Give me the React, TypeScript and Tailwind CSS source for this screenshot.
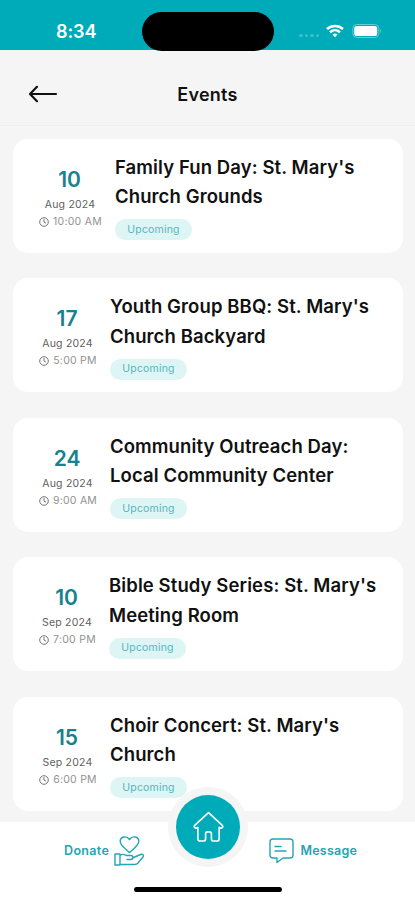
type ChurchEvent = {
  day: string;
  month: string;
  time: string;
  lines: string[];
  dateWidth: string;
};

const events: ChurchEvent[] = [
  { day: "10", month: "Aug 2024", time: "10:00 AM", lines: ["Family Fun Day: St. Mary's", "Church Grounds"], dateWidth: "w-[63px]" },
  { day: "17", month: "Aug 2024", time: "5:00 PM", lines: ["Youth Group BBQ: St. Mary's", "Church Backyard"], dateWidth: "w-[58px]" },
  { day: "24", month: "Aug 2024", time: "9:00 AM", lines: ["Community Outreach Day:", "Local Community Center"], dateWidth: "w-[58px]" },
  { day: "10", month: "Sep 2024", time: "7:00 PM", lines: ["Bible Study Series: St. Mary's", "Meeting Room"], dateWidth: "w-[57px]" },
  { day: "15", month: "Sep 2024", time: "6:00 PM", lines: ["Choir Concert: St. Mary's", "Church"], dateWidth: "w-[58px]" },
];

function StatusBar() {
  return (
    <header className="relative flex h-[50px] shrink-0 items-start bg-[#00abb9]">
      <span className="ml-[56px] mt-[20px] text-[18px] font-semibold leading-6 tracking-[-0.1px] text-white">8:34</span>
      <div className="absolute left-[142px] top-[12px] z-10 h-[39px] w-[132px] rounded-full bg-black" />
      <div className="ml-auto mr-[33px] mt-[23px] flex items-center">
        <div className="mr-[7px] mt-[9px] flex gap-[2px]">
          {[0, 1, 2, 3].map((dot) => (
            <i key={dot} className="size-[3.5px] rounded-full bg-[#3cbfca]" />
          ))}
        </div>
        <svg width="18" height="14" viewBox="0 0 18 14" fill="none" stroke="white" strokeWidth="2.5">
          <path d="M1 5C5.5.9 12.500.9 17 5" />
          <path d="M4 8.300C7 5.600 11 5.600 14 8.300" />
          <path d="M6.500 10.600Q9 8.500 11.500 10.600L9 13.200Z" fill="white" stroke="none" />
        </svg>
        <svg className="ml-[8px]" width="30" height="16" viewBox="0 0 30 16">
          <rect x=".8" y="1.500" width="26" height="13" rx="4" fill="none" stroke="#63ccd5" />
          <rect x="2.200" y="3" width="23" height="10" rx="2.600" fill="white" />
          <path d="M28 6q2 2 0 4z" fill="#63ccd5" />
        </svg>
      </div>
    </header>
  );
}

function EventCard({ event }: { event: ChurchEvent }) {
  return (
    <article className="flex h-[114px] shrink-0 rounded-[15px] bg-white pl-[26px]">
      <div className={`flex shrink-0 flex-col items-center pt-[28px] ${event.dateWidth}`}>
        <span className="mr-[2px] text-[21px] font-semibold leading-[26px] text-[#17818f]">{event.day}</span>
        <span className="mr-px mt-[4px] whitespace-nowrap text-[10.5px] leading-4 tracking-[0.2px] text-[#606060]">{event.month}</span>
        <span className="mt-px flex items-center gap-[4px] whitespace-nowrap text-[10.5px] leading-4 tracking-[0.25px] text-[#929292]">
          <svg width="10" height="10" viewBox="0 0 10 10" fill="none" stroke="#747474">
            <circle cx="5" cy="5" r="4.300" />
            <path d="M5 2v3l2 1.200" />
          </svg>
          {event.time}
        </span>
      </div>
      <div className="ml-[13px] pt-[14px]">
        <h2 className="text-[18.5px] font-semibold leading-[29.5px] tracking-[0.1px] text-[#111]">
          {event.lines.map((line) => (
            <span key={line} className="block whitespace-nowrap">{line}</span>
          ))}
        </h2>
        <span className="mt-[7.5px] flex h-[21px] w-[77px] items-center justify-center rounded-full bg-[#def5f5] text-[10.5px] tracking-[0.2px] text-[#55b5bd]">
          Upcoming
        </span>
      </div>
    </article>
  );
}

function BottomNav() {
  return (
    <nav className="relative flex h-[78px] shrink-0 bg-white text-[12.5px] font-semibold text-[#23a5b2]">
      <div className="ml-[64px] mt-[13px] flex h-8 items-center gap-[5px]">
        <span className="tracking-[0.35px]">Donate</span>
        <svg width="31" height="32" viewBox="0 0 31 32" fill="none" stroke="currentColor" strokeWidth="1.400" strokeLinejoin="round" strokeLinecap="round">
          <path d="M15.500 17.500C12 14.300 6.200 10.500 6.200 6.300C6.200 1.300 12.500.3 15.500 4.500C18.500.3 24.800 1.300 24.800 6.300C24.800 10.500 19 14.300 15.500 17.500Z" />
          <path d="M1 19h5v11H1zM6 20.500c2-1.500 4-1.500 6 0h5c2.500 0 2.500 4 0 4h-4M18.500 23l8-3.500c2-.8 3.800.8 2.500 2.500l-5 6c-1 1.200-2 1.500-3.500 1.500H6" />
        </svg>
      </div>
      <div className="absolute left-[168px] top-[-35.5px] flex size-20 items-center justify-center rounded-full bg-[#f5f5f5]">
        <div className="flex size-16 items-center justify-center rounded-full bg-[#00abb9]">
          <svg width="31" height="32" viewBox="0 0 32 32" fill="none" stroke="white" strokeWidth="1.700" strokeLinejoin="round">
            <path d="M16 1.200L30 14c2 2-.5 4-3 2.500V28q0 2.500-2.500 2.500h-3Q19 30.500 19 28v-5q0-2-2-2h-2q-2 0-2 2v5q0 2.500-2.500 2.500h-3Q5 30.500 5 28V16.500C2.500 18 0 16 2 14Z" />
          </svg>
        </div>
      </div>
      <div className="ml-auto mr-[58px] mt-[13px] flex h-8 items-center gap-[7px]">
        <svg width="25" height="26" viewBox="0 0 25 26" fill="none" stroke="currentColor" strokeWidth="1.400" strokeLinejoin="round" strokeLinecap="round">
          <path d="M4 1h17q3 0 3 3v13q0 3-3 3h-7l-6 4.500V20H4q-3 0-3-3V4q0-3 3-3ZM6 8.500h6M6 13h11" />
        </svg>
        <span className="tracking-[0.2px]">Message</span>
      </div>
      <div className="absolute left-[134px] top-[65px] h-[5px] w-[148px] rounded-full bg-black" />
    </nav>
  );
}

export default function App() {
  return (
    <div className="flex h-[900px] w-[415px] flex-col overflow-hidden bg-[#f5f5f5] font-['Inter',sans-serif]">
      <StatusBar />
      <div className="grid h-[76px] shrink-0 grid-cols-3 items-center border-b border-[#eeeeee] pt-[13px]">
        <svg className="ml-[28px]" width="30" height="18" viewBox="0 0 30 18" fill="none" stroke="#111" strokeWidth="2.200" strokeLinecap="round" strokeLinejoin="round">
          <path d="M28 9H2M9 1.800L2 9l7 7.200" />
        </svg>
        <h1 className="text-center text-[18px] font-semibold tracking-[0.25px] text-[#111]">Events</h1>
      </div>
      <main className="flex min-h-0 flex-1 flex-col gap-[25.5px] overflow-hidden pl-[13px] pr-[12px] pt-[12.5px]">
        {events.map((event) => (
          <EventCard key={event.month + event.day} event={event} />
        ))}
      </main>
      <BottomNav />
    </div>
  );
}
